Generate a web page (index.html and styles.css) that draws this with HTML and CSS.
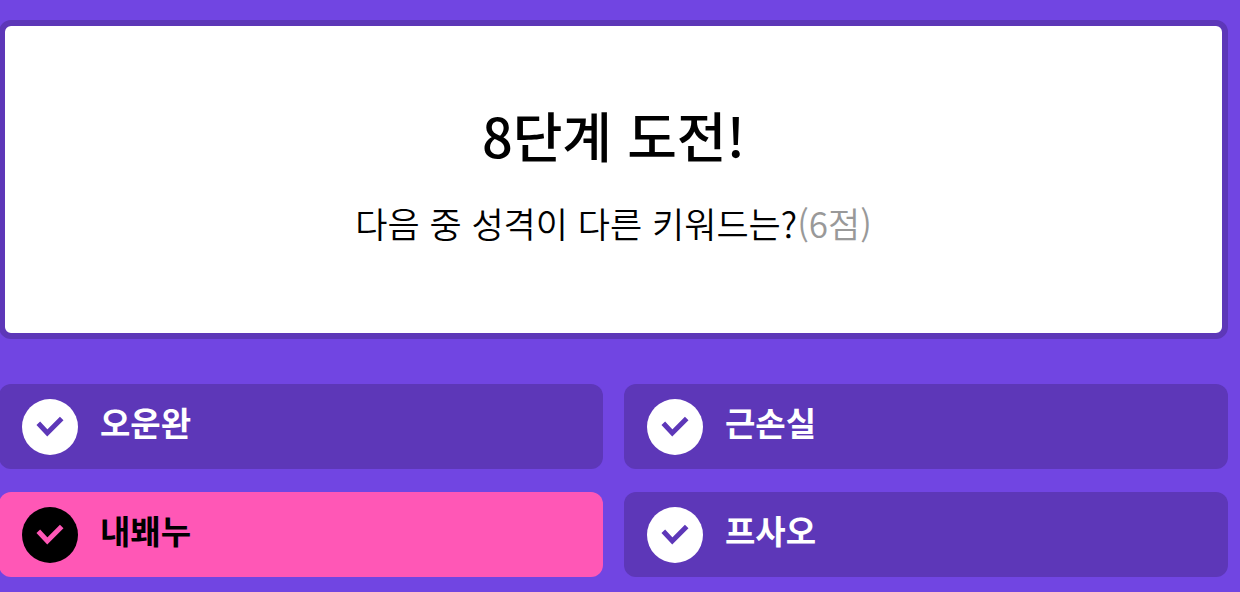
FILE: index.html
```html
<!DOCTYPE html>
<html lang="ko">
<head>
  <meta charset="UTF-8" />
  <meta name="viewport" content="width=device-width, initial-scale=1.0" />
  <title>8단계 도전!</title>
  <link rel="stylesheet" href="styles.css">
</head>
<body>
  <main class="quiz">
    <section class="question">
      <h1>8단계 도전!</h1>
      <p id="question">다음 중 성격이 다른 키워드는?<span class="point">(6점)</span></p>
    </section>

    <form class="options" role="radiogroup" aria-labelledby="question">
      <label class="option">
        <span class="check">
          <input type="radio" name="answer" value="1" />
          <svg viewBox="0 0 56 56" aria-hidden="true"><path d="M16.3 24.3 25.3 34 39.7 19.5" /></svg>
        </span>
        <span class="text">오운완</span>
      </label>
      <label class="option">
        <span class="check">
          <input type="radio" name="answer" value="2" />
          <svg viewBox="0 0 56 56" aria-hidden="true"><path d="M16.3 24.3 25.3 34 39.7 19.5" /></svg>
        </span>
        <span class="text">근손실</span>
      </label>
      <label class="option">
        <span class="check">
          <input type="radio" name="answer" value="3" checked />
          <svg viewBox="0 0 56 56" aria-hidden="true"><path d="M16.3 24.3 25.3 34 39.7 19.5" /></svg>
        </span>
        <span class="text">내봬누</span>
      </label>
      <label class="option">
        <span class="check">
          <input type="radio" name="answer" value="4" />
          <svg viewBox="0 0 56 56" aria-hidden="true"><path d="M16.3 24.3 25.3 34 39.7 19.5" /></svg>
        </span>
        <span class="text">프사오</span>
      </label>
    </form>
  </main>
</body>
</html>
```

FILE: styles.css
```css
* {
  box-sizing: border-box;
}

body {
  margin: 0;
  background-color: #7145e2;
  color: #000;
  font-family: "Noto Sans CJK KR", sans-serif;
}

.quiz {
  margin: 20px 12px 14px -1px;
}

.question {
  padding: 69px 20px 81px;
  background-color: #fff;
  border: 6px solid #5d37b8;
  border-radius: 12px;
  text-align: center;
}

h1 {
  margin: 0 0 18px;
  font-size: 54px;
  font-weight: 500;
  line-height: 80px;
}

.question p {
  margin: 0;
  font-size: 35px;
  font-weight: 350;
  line-height: 59px;
}

.point {
  color: #999;
}

.options {
  display: grid;
  grid-template-columns: 1fr 1fr;
  gap: 23px 21px;
  margin-top: 45px;
}

.option {
  display: flex;
  align-items: center;
  gap: 22px;
  padding: 15px 23px 14px;
  border-radius: 12px;
  background-color: #5d37b8;
  color: #fff;
  cursor: pointer;
}

.option:has(input:checked) {
  background-color: #ff57b6;
  color: #000;
}

.check {
  display: grid;
}

.check input,
.check svg {
  grid-area: 1 / 1;
  width: 56px;
  height: 56px;
  margin: 0;
}

.check input {
  appearance: none;
  border-radius: 50%;
  background-color: currentColor;
  color: inherit;
  cursor: pointer;
}

.check svg {
  fill: none;
  stroke: #5d37b8;
  stroke-width: 5;
  pointer-events: none;
}

.check input:checked + svg {
  stroke: #ff57b6;
}

.text {
  padding-bottom: 10px;
  font-size: 33px;
  font-weight: 700;
  line-height: 46px;
}
```
